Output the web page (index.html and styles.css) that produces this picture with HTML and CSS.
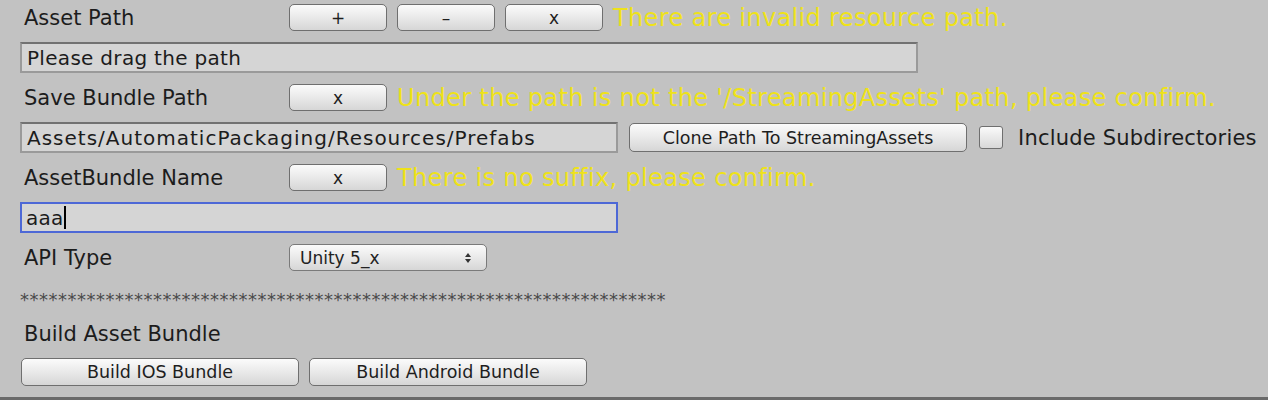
FILE: index.html
```html
<!DOCTYPE html>
<html>
<head>
<meta charset="utf-8">
<link rel="stylesheet" href="styles.css">
</head>
<body>
<div class="panel">
  <div class="row r-btn">
    <div class="label">Asset Path</div>
    <div class="btn small">+</div>
    <div class="btn small">–</div>
    <div class="btn small">x</div>
    <div class="warn">There are invalid resource path.</div>
  </div>
  <div class="row r-field">
    <div class="field wide">Please drag the path</div>
  </div>
  <div class="row r-btn">
    <div class="label">Save Bundle Path</div>
    <div class="btn small">x</div>
    <div class="warn">Under the path is not the '/StreamingAssets' path, please confirm.</div>
  </div>
  <div class="row r-field">
    <div class="field mid path">Assets/AutomaticPackaging/Resources/Prefabs</div>
    <div class="btn clone">Clone Path To StreamingAssets</div>
    <div class="check"></div>
    <div class="check-label">Include Subdirectories</div>
  </div>
  <div class="row r-btn">
    <div class="label">AssetBundle Name</div>
    <div class="btn small">x</div>
    <div class="warn">There is no suffix, please confirm.</div>
  </div>
  <div class="row r-field">
    <div class="field mid focus">aaa<span class="caret"></span></div>
  </div>
  <div class="row r-btn">
    <div class="label">API Type</div>
    <div class="select">
      <span>Unity 5_x</span>
      <svg class="arrows" width="8" height="12" viewBox="0 0 8 12"><path d="M4 1 L7 5 L1 5 Z" fill="#333"/><path d="M4 11 L7 7 L1 7 Z" fill="#333"/></svg>
    </div>
  </div>
  <div class="row r-stars">
    <div class="stars">********************************************************************</div>
  </div>
  <div class="row r-label">
    <div class="label">Build Asset Bundle</div>
  </div>
  <div class="row r-build">
    <div class="btn build">Build IOS Bundle</div>
    <div class="btn build">Build Android Bundle</div>
  </div>
</div>
<div class="bottom-line"></div>
</body>
</html>
```
FILE: styles.css
```css
html, body {
  margin: 0;
  padding: 0;
  background: #c2c2c2;
  width: 1268px;
  height: 400px;
  overflow: hidden;
  font-family: "DejaVu Sans", "Liberation Sans", sans-serif;
  color: #1c1c1c;
}
.panel {
  padding: 4px 0 0 20px;
  display: flex;
  flex-direction: column;
  gap: 11px;
  height: 393px;
  box-sizing: border-box;
}
.row {
  display: flex;
  align-items: center;
}
.r-btn { height: 27px; }
.r-field { height: 31px; }
.r-stars { height: 28px; }
.r-label { height: 26px; }
.r-build { height: 28px; padding-left: 1px; gap: 10px; }

.label {
  width: 265px;
  padding-left: 4px;
  font-size: 21px;
  white-space: nowrap;
}
.btn {
  box-sizing: border-box;
  height: 27px;
  border: 1.5px solid #6f6f6f;
  border-radius: 5px;
  background: linear-gradient(#fbfbfb, #e9e9e9 50%, #d6d6d6);
  display: flex;
  align-items: center;
  justify-content: center;
  font-size: 17px;
  color: #1e1e1e;
  white-space: nowrap;
}
.btn.small {
  width: 98px;
  margin-right: 10px;
}
.warn {
  font-size: 24px;
  color: #efe21a;
  white-space: nowrap;
  letter-spacing: 0.35px;
}
.field {
  box-sizing: border-box;
  height: 31px;
  background: #d5d5d5;
  border: 2px solid #9a9a9a;
  border-top-color: #727272;
  font-size: 20px;
  letter-spacing: 0.3px;
  padding-left: 5px;
  display: flex;
  align-items: center;
  white-space: nowrap;
  color: #1c1c1c;
}
.field.wide { width: 898px; }
.field.mid { width: 598px; }
.field.path { letter-spacing: 1px; }
.field.focus {
  border: 2.5px solid #4d68d6;
  padding-left: 4px;
}
.caret {
  display: inline-block;
  width: 2px;
  height: 23px;
  background: #000;
}
.btn.clone {
  width: 338px;
  height: 29px;
  margin-left: 11px;
  font-size: 17.5px;
}
.check {
  box-sizing: border-box;
  width: 24px;
  height: 23px;
  margin-left: 12px;
  border: 1.5px solid #6f6f6f;
  border-radius: 3px;
  background: linear-gradient(#fafafa, #d8d8d8);
}
.check-label {
  margin-left: 15px;
  font-size: 21px;
  letter-spacing: 0.2px;
  white-space: nowrap;
}
.select {
  box-sizing: border-box;
  width: 198px;
  height: 27px;
  border: 1.5px solid #7a7a7a;
  border-radius: 5px;
  background: linear-gradient(#fbfbfb, #e9e9e9 50%, #d6d6d6);
  display: flex;
  align-items: center;
  justify-content: space-between;
  padding: 0 14px 0 10px;
  font-size: 17px;
  color: #222;
}
.arrows { display: block; }
.stars {
  font-size: 18px;
  color: #4a4a4a;
  letter-spacing: 0.5px;
  white-space: nowrap;
  overflow: hidden;
  width: 646px;
  padding-top: 6px;
}
.btn.build {
  width: 278px;
  height: 28px;
  font-size: 17.5px;
}
.bottom-line {
  height: 3px;
  background: #6a6a6a;
  margin-top: 4px;
}
```
